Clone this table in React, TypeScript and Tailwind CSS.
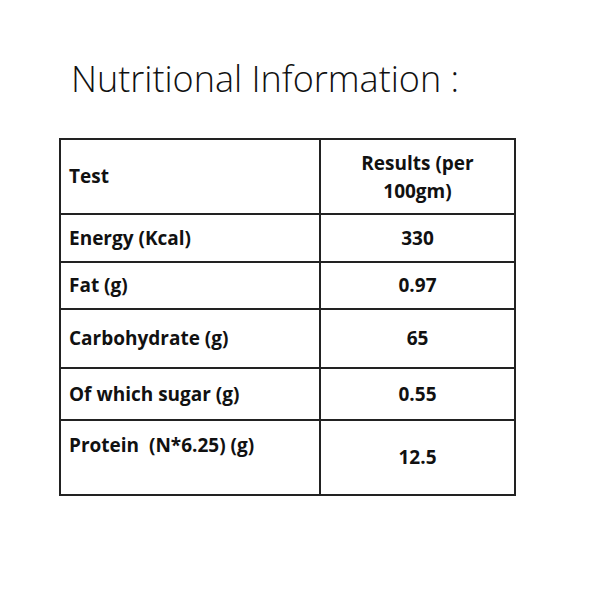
const rows = [
  { test: 'Energy (Kcal)', value: '330', h: 'h-[48px]' },
  { test: 'Fat (g)', value: '0.97', h: 'h-[47px]' },
  { test: 'Carbohydrate (g)', value: '65', h: 'h-[59px]' },
  { test: 'Of which sugar (g)', value: '0.55', h: 'h-[52px]' },
];

export default function App() {
  return (
    <div className="w-[590px] h-[590px] bg-white text-[#111] font-['Open_Sans',sans-serif]">
      <div className="pt-[57px] pl-[71px] text-[36px] font-light leading-[44px]">
        Nutritional Information :
      </div>

      {/* Table */}
      <div className="mt-[37px] ml-[59px] w-[457px] border-2 border-[#222] text-[19px] font-bold">
        <div className="flex h-[75px] border-b-2 border-[#222]">
          <div className="w-[260px] flex items-center pl-[8px] border-r-2 border-[#222]">Test</div>
          <div className="flex-1 flex items-center justify-center text-center leading-[28px]">
            Results (per
            <br />
            100gm)
          </div>
        </div>

        {rows.map((r) => (
          <div key={r.test} className={`flex ${r.h} border-b-2 border-[#222]`}>
            <div className="w-[260px] flex items-center pl-[8px] border-r-2 border-[#222]">{r.test}</div>
            <div className="flex-1 flex items-center justify-center">{r.value}</div>
          </div>
        ))}

        <div className="flex h-[73px]">
          <div className="w-[260px] pt-[10px] pl-[8px] border-r-2 border-[#222]">Protein&nbsp; (N*6.25) (g)</div>
          <div className="flex-1 flex items-center justify-center">12.5</div>
        </div>
      </div>
    </div>
  );
}
